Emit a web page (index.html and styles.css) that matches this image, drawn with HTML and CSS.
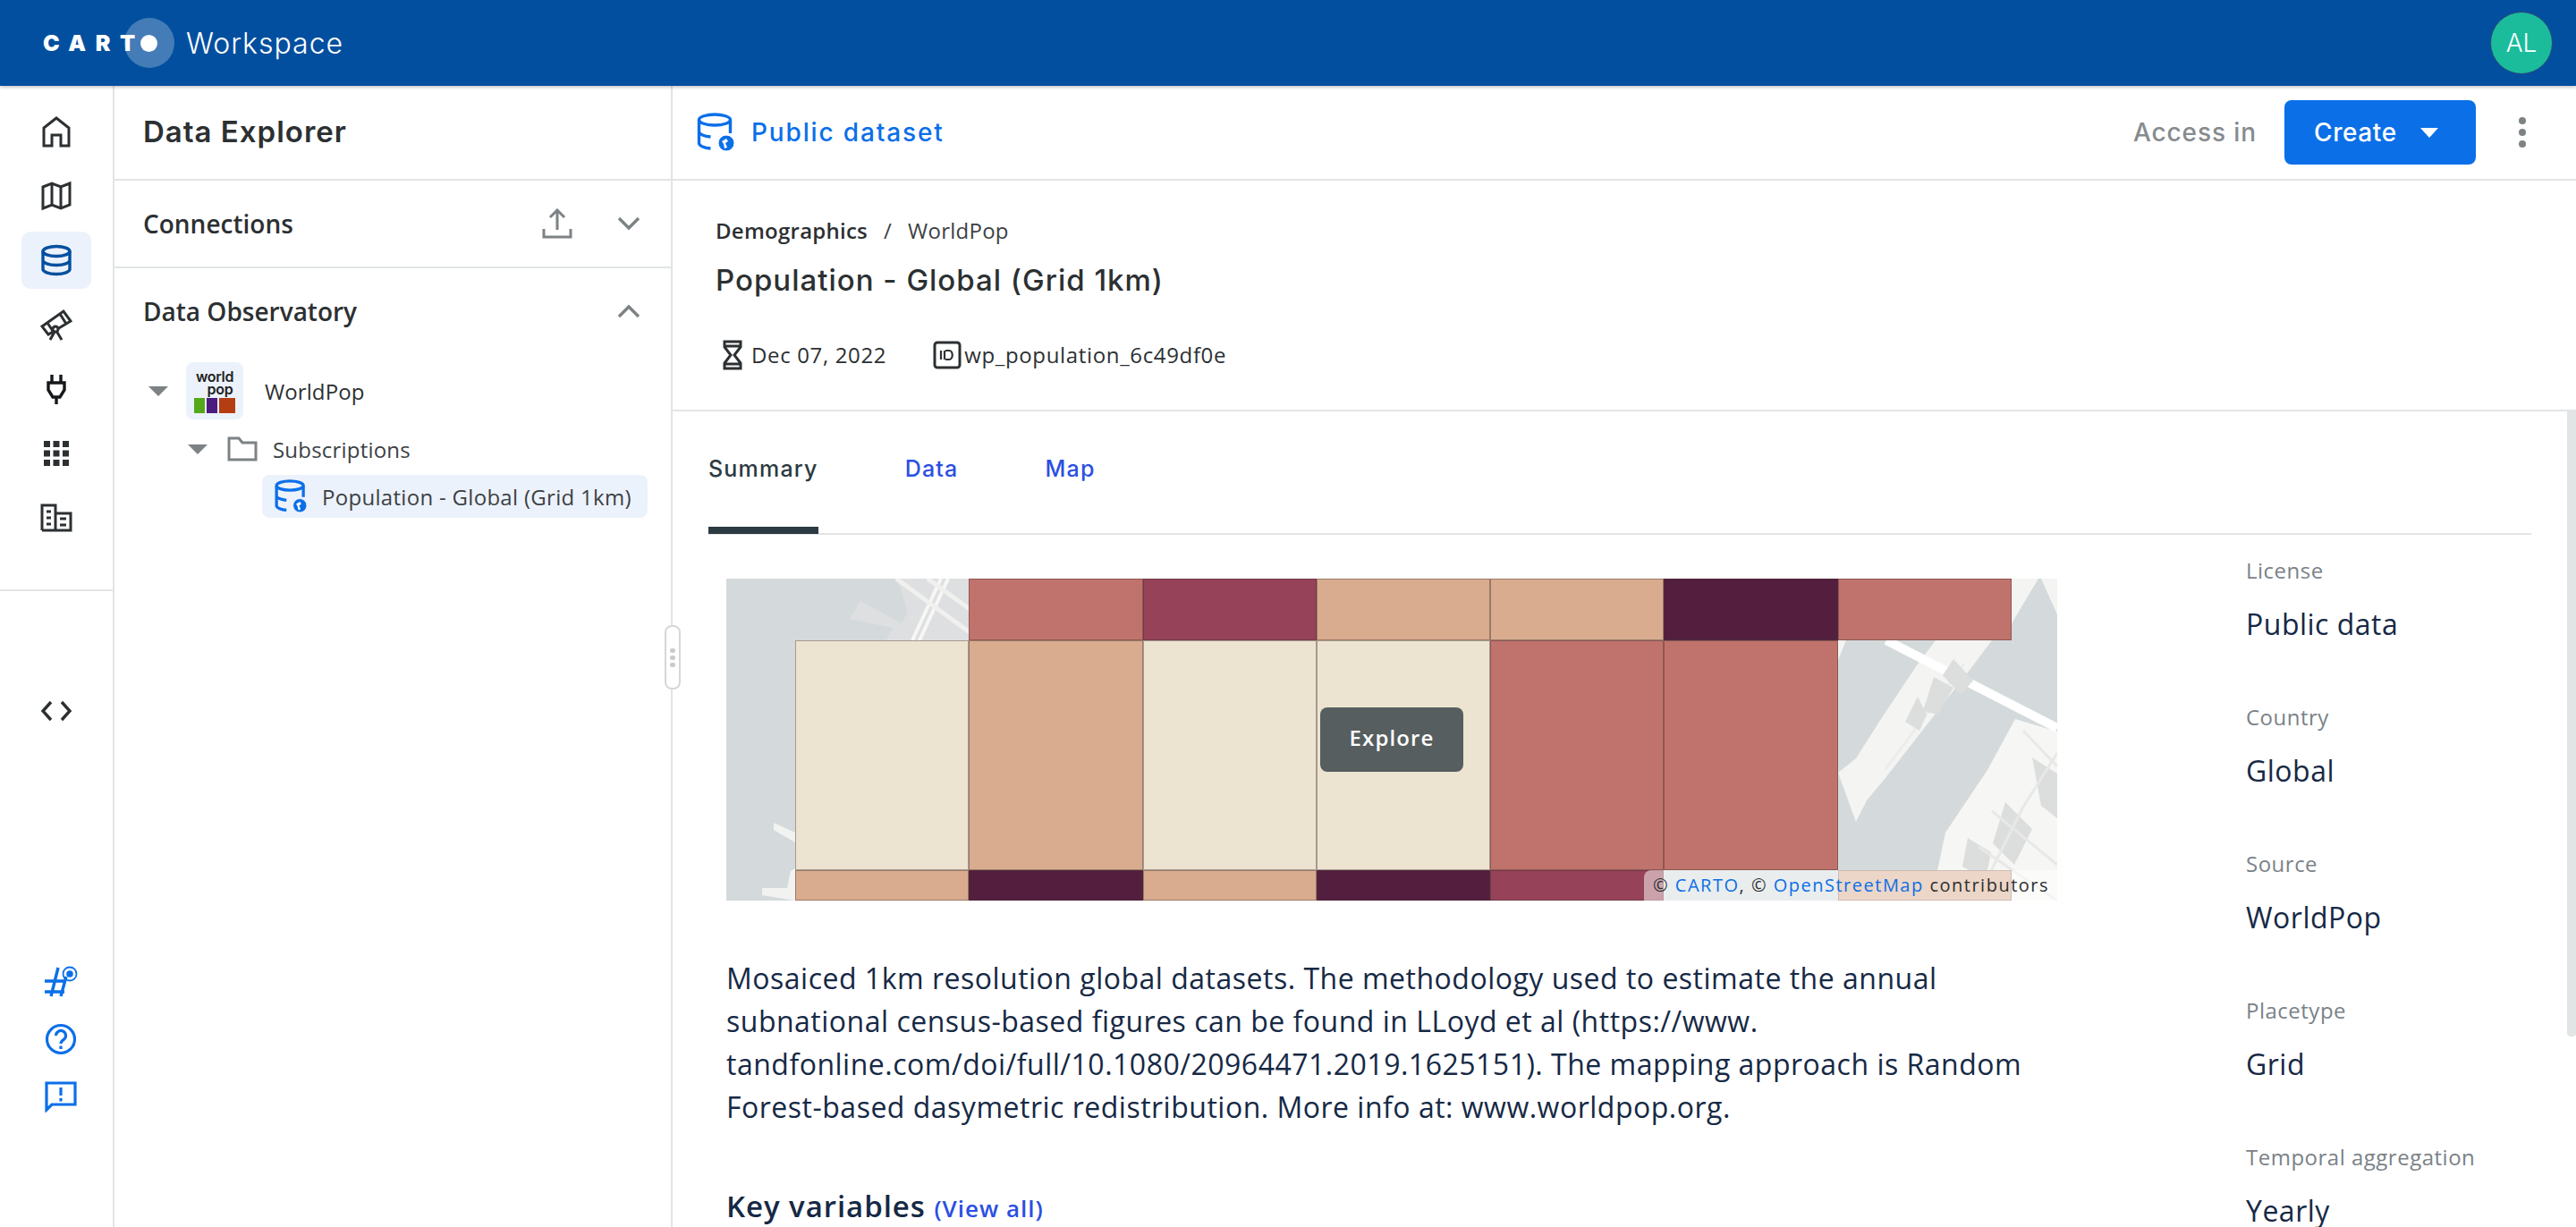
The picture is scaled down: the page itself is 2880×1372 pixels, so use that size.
FILE: index.html
```html
<!DOCTYPE html>
<html lang="en">
<head>
<meta charset="utf-8">
<title>CARTO Workspace</title>
<link rel="stylesheet" href="styles.css">
</head>
<body>
<header class="topbar">
  <div class="logo"><span class="logo-text">CART</span><span class="logo-o"><span class="logo-dot"></span></span></div>
  <span class="product">Workspace</span>
  <span class="avatar">AL</span>
</header>
<div class="body-row">
  <nav class="rail">
    <div class="rail-top">
      <a class="rail-item"><svg width="34" height="36" viewBox="0 0 34 36" fill="none" stroke="#2c3032" stroke-width="3"><path d="M3 34V14L17 3l14 11v20h-9V22h-10v12z"/></svg></a>
      <a class="rail-item"><svg width="34" height="34" viewBox="0 0 34 34" fill="none" stroke="#2c3032" stroke-width="3"><path d="M2 7l10-4 10 4 10-4v24l-10 4-10-4-10 4zM12 3v24M22 7v24"/></svg></a>
      <a class="rail-item rail-active"><svg width="36" height="36" viewBox="0 0 36 36" fill="none" stroke="#034f9f" stroke-width="3.4"><ellipse cx="18" cy="8" rx="15" ry="5.5"/><path d="M3 8v20c0 3 6.500 5.500 15 5.500S33 31 33 28V8M3 18c0 3 6.500 5.500 15 5.500S33 21 33 18"/></svg></a>
      <a class="rail-item"><svg width="36" height="36" viewBox="0 0 36 36" fill="none" stroke="#2c3032" stroke-width="3"><path d="M2 20l24-17 8 11-25 15zM8 16l6 9M22 6l7 11M16 26l-5 9M18 25l6 10"/><circle cx="17" cy="23" r="3" fill="#fff"/></svg></a>
      <a class="rail-item"><svg width="24" height="34" viewBox="0 0 24 34" fill="none" stroke="#16181a" stroke-width="3.4"><path d="M7 1v9M17 1v9M3 10h18v8l-5 8H8l-5-8zM12 26v8"/></svg></a>
      <a class="rail-item"><svg width="30" height="30" viewBox="0 0 30 30" fill="#2c3032"><path d="M1 1h7v7H1zM11.500 1h7v7h-7zM22 1h7v7h-7zM1 11.500h7v7H1zM11.500 11.500h7v7h-7zM22 11.500h7v7h-7zM1 22h7v7H1zM11.500 22h7v7h-7zM22 22h7v7h-7z"/></svg></a>
      <a class="rail-item"><svg width="36" height="32" viewBox="0 0 36 32" fill="none" stroke="#2c3032" stroke-width="3"><path d="M2 30V2h15v28M17 11h17v19H2M7 9h5M7 16h5M7 23h5M22 17h7M22 24h7"/></svg></a>
    </div>
    <div class="rail-mid">
      <a class="rail-item"><svg width="36" height="24" viewBox="0 0 36 24" fill="none" stroke="#2c3032" stroke-width="3.400"><path d="M12 2L3 12l9 10M24 2l9 10-9 10"/></svg></a>
    </div>
    <div class="rail-bottom">
      <a class="help-item"><svg width="38" height="36" viewBox="0 0 38 36" fill="none" stroke="#0b6fe8" stroke-width="3.400"><path d="M16 2L8 34M25 12l-6 22M1 17h24M1 29h22"/><circle cx="29" cy="9" r="7.500" stroke-width="1.800"/><circle cx="29" cy="9" r="3.800" fill="#0b6fe8" stroke="none"/></svg></a>
      <a class="help-item"><svg width="36" height="36" viewBox="0 0 36 36" fill="none" stroke="#0b6fe8" stroke-width="3.200"><circle cx="18" cy="18" r="15.500"/><path d="M12.500 14a5.500 5.500 0 1 1 8.500 4.600c-2 1.400-3 2.300-3 4.400"/><path d="M18 25.500v3.500"/></svg></a>
      <a class="help-item"><svg width="36" height="36" viewBox="0 0 36 36" fill="none" stroke="#0b6fe8" stroke-width="3.200"><path d="M2 3h32v24H8l-6 6z"/><path d="M18 8v9M18 20v3.500"/></svg></a>
    </div>
  </nav>

  <aside class="sidebar">
    <div class="side-head">Data Explorer</div>
    <div class="side-row">
      <span class="side-title">Connections</span>
      <svg class="upload" width="34" height="34" viewBox="0 0 34 34" fill="none" stroke="#7d8284" stroke-width="3"><path d="M17 24V3M9 10l8-8 8 8M2 23v9h30v-9"/></svg>
      <svg class="chev" width="26" height="16" viewBox="0 0 26 16" fill="none" stroke="#7d8284" stroke-width="3.400"><path d="M2 2l11 11L24 2"/></svg>
    </div>
    <div class="side-section">
      <div class="side-row side-row-plain">
        <span class="side-title">Data Observatory</span>
        <svg class="chev" width="26" height="16" viewBox="0 0 26 16" fill="none" stroke="#7d8284" stroke-width="3.400"><path d="M2 14L13 3l11 11"/></svg>
      </div>
      <div class="tree">
        <div class="tree-provider">
          <span class="caret"></span>
          <span class="provider-logo">
            <span class="wp-word">world</span>
            <span class="wp-word wp-pop">pop</span>
            <span class="wp-flags"><i class="wp-g"></i><i class="wp-p"></i><i class="wp-r"></i></span>
          </span>
          <span class="provider-name">WorldPop</span>
        </div>
        <div class="tree-folder">
          <span class="caret"></span>
          <svg width="34" height="28" viewBox="0 0 34 28" fill="none" stroke="#7d8284" stroke-width="3"><path d="M2 2h11l4 5h15v19H2z"/></svg>
          <span class="folder-name">Subscriptions</span>
        </div>
        <div class="tree-leaf">
          <svg width="36" height="38" viewBox="0 0 42 44" fill="none" stroke="#0b6fe8" stroke-width="3.800"><ellipse cx="20" cy="8" rx="17.500" ry="6"/><path d="M2.500 8v26c0 3 6 5.500 13 6M37.500 8v15M2.500 21c0 3 6 5.500 13 6"/><circle cx="33" cy="34" r="9" fill="#0b6fe8" stroke="#fff" stroke-width="1"/><path d="M28 32l5-3 2 3-3 2 2 5-3 1-1-5z" fill="#fff" stroke="none"/></svg>
          <span>Population - Global (Grid 1km)</span>
        </div>
      </div>
    </div>
  </aside>

  <main class="main">
    <div class="main-head">
      <svg width="44" height="44" viewBox="0 0 42 44" fill="none" stroke="#0b6fe8" stroke-width="3.400"><ellipse cx="20" cy="8" rx="17.500" ry="6"/><path d="M2.500 8v26c0 3 6 5.500 13 6M37.500 8v15M2.500 21c0 3 6 5.500 13 6"/><circle cx="33" cy="34" r="9" fill="#0b6fe8" stroke="#fff" stroke-width="1"/><path d="M28 32l5-3 2 3-3 2 2 5-3 1-1-5z" fill="#fff" stroke="none"/></svg>
      <span class="public-label">Public dataset</span>
      <span class="access">Access in</span>
      <button class="create">Create<span class="create-caret"></span></button>
      <span class="kebab"><i></i><i></i><i></i></span>
    </div>
    <div class="meta">
      <div class="crumbs"><span class="crumb-strong">Demographics</span><span class="crumb-sep">/</span><span>WorldPop</span></div>
      <h1 class="title">Population - Global (Grid 1km)</h1>
      <div class="facts">
        <span class="fact fact-date"><svg width="22" height="34" viewBox="0 0 22 34" fill="none" stroke="#2c3032" stroke-width="3"><path d="M2 2h18v6l-7 9 7 9v6H2v-6l7-9-7-9zM2 7h18M2 27h18"/></svg>Dec 07, 2022</span>
        <span class="fact"><svg width="32" height="32" viewBox="0 0 32 32" fill="none" stroke="#2c3032" stroke-width="3"><rect x="2" y="2" width="28" height="28" rx="3"/><path d="M9 11v10M14 11h4M13 11v10M14 21h4M18 11c5 0 5 10 0 10" stroke-width="2.200"/></svg>wp_population_6c49df0e</span>
      </div>
    </div>
    <div class="tabs">
      <a class="tab tab-active">Summary</a>
      <a class="tab">Data</a>
      <a class="tab">Map</a>
    </div>
    <div class="content">
      <div class="summary">
        <div class="map">
          <svg class="map-base" viewBox="0 0 1488 360" width="1488" height="360">
            <rect width="1488" height="360" fill="#d4dadc"/>
            <path d="M191 0h81v69h-93l7-14-48-10 12-20 46 25 7-13z" fill="#dedfe0"/>
            <path d="M208 69L240 0M216 69L248 0" stroke="#f7f7f5" stroke-width="4"/>
            <path d="M190 0l82 60M225 0l47 34" stroke="#f0f0ee" stroke-width="5"/>
            <path d="M53 273v8l24 14v-11zM40 346h28l4-19 5-3v36l-37-6z" fill="#f2f3f1"/>
            <path d="M1243 69h9l-9 22zM1243 217l20-16 26-41 42-63 21-28h63l-21 28-99 127-20 24-12 24z" fill="#f4f4f2"/>
            <path d="M1441 157l47 14v189h-141l16-76 47-70z" fill="#f6f6f4"/>
            <path d="M1437 0h30l-30 50zM1470 0h18v40z" fill="#f4f4f2"/>
            <path d="M1297 69l191 98" stroke="#fff" stroke-width="10"/>
            <path d="M1296 213l88-118" stroke="#ececea" stroke-width="3" fill="none"/>
            <path d="M1350 110l22 12-18 30-16-4zM1318 160l14-28 10 20-8 18zM1372 90l22 24-14 16-20-22z" fill="#dcdddd"/>
            <path d="M1430 250l30 30-20 40-24-24zM1460 200l28 18v50l-18-14zM1388 290l26 16-6 30-26-14z" fill="#dcdddd"/>
            <path d="M1488 195l-38 60-50 100M1450 170l38 40M1415 260l73 60M1400 300l88 60" stroke="#e8e8e6" stroke-width="3" fill="none"/>
          </svg>
          <div class="hexgrid">
            <i class="cell cell-none"></i><i class="cell cell-none"></i><i class="cell c3"></i><i class="cell c4"></i><i class="cell c2"></i><i class="cell c2"></i><i class="cell c5"></i><i class="cell c3"></i><i class="cell cell-none"></i>
            <i class="cell cell-none"></i><i class="cell c1"></i><i class="cell c2"></i><i class="cell c1"></i><i class="cell c1"></i><i class="cell c3"></i><i class="cell c3"></i><i class="cell cell-none"></i><i class="cell cell-none"></i>
            <i class="cell cell-none"></i><i class="cell c2"></i><i class="cell c5"></i><i class="cell c2"></i><i class="cell c5"></i><i class="cell c4"></i><i class="cell cell-none"></i><i class="cell c2"></i><i class="cell cell-none"></i>
          </div>
          <button class="explore">Explore</button>
          <div class="attribution">© <a>CARTO</a>, © <a>OpenStreetMap</a> contributors</div>
        </div>
        <p class="desc">Mosaiced 1km resolution global datasets. The methodology used to estimate the annual subnational census-based figures can be found in LLoyd et al (https://www.<br>tandfonline.com/doi/full/10.1080/20964471.2019.1625151). The mapping approach is Random Forest-based dasymetric redistribution. More info at: www.worldpop.org.</p>
        <h2 class="key">Key variables <a class="view-all">(View all)</a></h2>
      </div>
      <dl class="props">
        <dt>License</dt><dd>Public data</dd>
        <dt>Country</dt><dd>Global</dd>
        <dt>Source</dt><dd>WorldPop</dd>
        <dt>Placetype</dt><dd>Grid</dd>
        <dt>Temporal aggregation</dt><dd>Yearly</dd>
      </dl>
    </div>
    <div class="scrollbar"></div>
  </main>
  <div class="handle"><i></i><i></i><i></i></div>
</div>
</body>
</html>
```
FILE: styles.css
```css
* { box-sizing: border-box; }
html, body { margin: 0; height: 100%; overflow: hidden; background: #fff; }
body { font-family: "Open Sans", sans-serif; color: #2c3032; display: flex; flex-direction: column; }

.topbar { height: 96px; flex: none; background: #034f9f; display: flex; align-items: center; padding-left: 48px; padding-right: 26px; box-shadow: 0 1px 4px rgba(0,0,0,.3); position: relative; z-index: 2; }
.logo { display: flex; align-items: center; width: 160px; }
.logo-text { font-family: Inter, sans-serif; font-weight: 900; font-size: 25px; letter-spacing: 10.500px; color: #fff; line-height: 1; }
.logo-o { width: 56px; height: 56px; border-radius: 50%; background: rgba(255,255,255,.26); display: flex; align-items: center; justify-content: center; margin-left: -23px; flex: none; }
.logo-dot { width: 19px; height: 19px; border-radius: 50%; background: #fff; }
.product { font-family: Inter, sans-serif; font-weight: 300; font-size: 32px; letter-spacing: 1px; color: #fff; }
.avatar { margin-left: auto; width: 70px; height: 70px; border-radius: 50%; background: #1abc9c; border: 1px solid #2c4a78; color: #fff; font-family: Inter, sans-serif; font-weight: 300; font-size: 28px; display: flex; align-items: center; justify-content: center; }

.body-row { flex: 1; display: flex; min-height: 0; position: relative; }

.rail { width: 128px; flex: none; border-right: 2px solid #e2e4e5; display: flex; flex-direction: column; }
.rail-top { height: 565px; padding: 15px 0 0 24px; border-bottom: 2px solid #e2e4e5; display: flex; flex-direction: column; }
.rail-item { width: 78px; height: 72px; display: flex; align-items: center; justify-content: center; flex: none; }
.rail-active { background: #ecf2fb; border-radius: 10px; height: 64px; margin: 4px 0; }
.rail-mid { padding: 98px 0 0 24px; }
.rail-bottom { margin-top: auto; padding: 0 0 128px 49px; display: flex; flex-direction: column; gap: 28px; }
.help-item { width: 38px; height: 36px; display: flex; align-items: center; justify-content: center; }

.sidebar { width: 624px; flex: none; border-right: 2px solid #e2e4e5; display: flex; flex-direction: column; }
.side-head { height: 106px; padding: 0 32px 2px; display: flex; align-items: center; border-bottom: 2px solid #e2e4e5; font-family: Inter, sans-serif; font-weight: 600; font-size: 33px; letter-spacing: 1px; color: #2c3032; }
.side-row { height: 98px; padding: 0 34px 0 32px; display: flex; align-items: center; border-bottom: 2px solid #e2e4e5; }
.side-row-plain { border-bottom: 0; padding-bottom: 2px; }
.side-title { font-weight: 600; font-size: 28px; color: #2c3032; margin-right: auto; }
.upload { margin-right: 50px; }
.tree { padding-top: 7px; }
.tree-provider { height: 64px; display: flex; align-items: center; padding-left: 38px; }
.caret { width: 0; height: 0; border-left: 11px solid transparent; border-right: 11px solid transparent; border-top: 11px solid #7d8284; flex: none; }
.provider-logo { width: 64px; height: 64px; background: #ecf2fb; border-radius: 8px; margin-left: 20px; display: flex; flex-direction: column; align-items: center; padding-top: 9px; flex: none; }
.wp-word { font-family: Inter, sans-serif; font-weight: 600; font-size: 16px; line-height: 14px; color: #222; letter-spacing: -.3px; }
.wp-pop { padding-left: 12px; }
.wp-flags { display: flex; gap: 2px; margin-top: 3px; }
.wp-flags i { width: 12px; height: 17px; display: block; }
.wp-g { background: #54a81a; }
.wp-p { background: #4d1a80; }
.wp-r { background: #b53d12; width: 18px !important; }
.provider-name { margin-left: 24px; font-weight: 500; font-size: 24px; letter-spacing: .1px; color: #2c3032; }
.tree-folder { height: 50px; margin-top: 8px; display: flex; align-items: center; padding-left: 82px; }
.tree-folder svg { margin-left: 22px; }
.folder-name { margin-left: 17px; font-size: 24px; letter-spacing: .2px; color: #3c4144; }
.tree-leaf { margin: 4px 26px 0 165px; height: 48px; background: #ecf2fb; border-radius: 8px; display: flex; align-items: center; padding-left: 14px; gap: 17px; font-size: 24px; letter-spacing: .3px; color: #3c4144; white-space: nowrap; }

.main { flex: 1; min-width: 0; display: flex; flex-direction: column; position: relative; overflow: hidden; }
.main-head { height: 106px; flex: none; border-bottom: 2px solid #e2e4e5; display: flex; align-items: center; padding-left: 26px; padding-right: 56px; }
.public-label { margin-left: 18px; font-family: Inter, sans-serif; font-weight: 500; font-size: 28px; letter-spacing: 1.850px; color: #0b6fe8; }
.access { margin-left: auto; font-family: Inter, sans-serif; font-weight: 500; font-size: 28px; letter-spacing: .9px; color: #868b8e; }
.create { margin-left: 31px; width: 214px; height: 72px; border: 0; border-radius: 8px; background: #0b6fe8; color: #fff; font-family: Inter, sans-serif; font-weight: 500; font-size: 28px; letter-spacing: .6px; display: flex; align-items: center; padding: 0 0 0 33px; }
.create-caret { width: 0; height: 0; border-left: 10px solid transparent; border-right: 10px solid transparent; border-top: 11px solid #fff; margin-left: 26px; }
.kebab { margin-left: 48px; display: flex; flex-direction: column; gap: 5px; width: 8px; }
.kebab i { width: 8px; height: 8px; border-radius: 50%; background: #7d8284; display: block; }

.meta { height: 258px; flex: none; border-bottom: 2px solid #e2e4e5; padding: 40px 48px 0; }
.crumbs { font-size: 24px; line-height: 32px; display: flex; gap: 18px; color: #3c4144; letter-spacing: .25px; }
.crumb-strong { font-weight: 600; color: #2c3032; }
.title { margin: 17px 0 0; font-family: Inter, sans-serif; font-weight: 500; font-size: 33px; letter-spacing: 1px; line-height: 44px; color: #2c3032; }
.facts { display: flex; margin-top: 42px; font-size: 24px; font-weight: 500; line-height: 40px; letter-spacing: .65px; padding-left: 8px; }
.fact { display: inline-flex; align-items: center; gap: 3px; color: #2c3032; }
.fact-date { gap: 10px; margin-right: 52px; }

.tabs { height: 138px; flex: none; margin: 0 50px 0 40px; border-bottom: 2px solid #e2e4e5; display: flex; gap: 97px; }
.tab { height: 137px; padding-top: 46px; font-family: Inter, sans-serif; font-weight: 500; font-size: 25px; letter-spacing: 1.200px; line-height: 36px; color: #2b4fe3; border-bottom: 8px solid transparent; }
.tab-active { color: #2c3a42; border-bottom-color: #2c3a42; }

.content { flex: 1; min-height: 0; display: flex; padding: 24px 0 0 60px; overflow: hidden; }
.summary { width: 1488px; flex: none; padding-top: 25px; }
.map { width: 1488px; height: 360px; position: relative; overflow: hidden; }
.map-base { display: block; }
.hexgrid { position: absolute; inset: 0; display: grid; grid-template-columns: 77px repeat(7, 194.300px) 1fr; grid-template-rows: 69px 257px 34px; }
.cell { display: block; border: 1px solid rgba(70,50,50,.42); }
.cell-none { border: 0; }
.c1 { background: #ece4d0; }
.c2 { background: #d9ac8f; }
.c3 { background: #c0736c; }
.c4 { background: #964258; }
.c5 { background: #541f3f; }
.explore { position: absolute; left: 664px; top: 144px; width: 160px; height: 72px; border: 0; border-radius: 8px; background: #565e5f; color: #fff; font-family: "Open Sans", sans-serif; font-weight: 600; font-size: 24px; letter-spacing: 1.100px; padding: 0 0 6px; }
.attribution { position: absolute; right: 0; bottom: 0; width: 462px; height: 34px; padding-left: 10px; background: rgba(255,255,255,.5); border-top-left-radius: 8px; font-size: 20px; line-height: 34px; letter-spacing: 1.500px; white-space: nowrap; color: #2c3032; }
.attribution a { color: #0b6fe8; }
.desc { margin: 63px 0 0; font-size: 32px; line-height: 48px; letter-spacing: .5px; color: #162945; }
.key { margin: 63px 0 0; font-weight: 600; font-size: 33px; letter-spacing: .95px; line-height: 48px; color: #162945; }
.view-all { font-weight: 600; font-size: 26px; letter-spacing: 1px; color: #2b4fe3; }

.props { margin: 0 0 0 211px; flex: none; width: 320px; }
.props dt { font-size: 24px; line-height: 32px; color: #7a8288; letter-spacing: .5px; }
.props dd { margin: 22px 0 66px; font-size: 32px; line-height: 44px; color: #162945; letter-spacing: .5px; }

.scrollbar { position: absolute; right: 0; top: 363px; width: 10px; height: 700px; background: #e2e5e5; border-radius: 0 0 4px 4px; }

.handle { position: absolute; left: 743px; top: 603px; width: 18px; height: 72px; background: #fff; border: 2px solid #d5d7d8; border-radius: 8px; display: flex; flex-direction: column; align-items: center; justify-content: center; gap: 3px; z-index: 1; }
.handle i { width: 6px; height: 5px; border-radius: 2px; background: #c9cbcc; display: block; }
```
